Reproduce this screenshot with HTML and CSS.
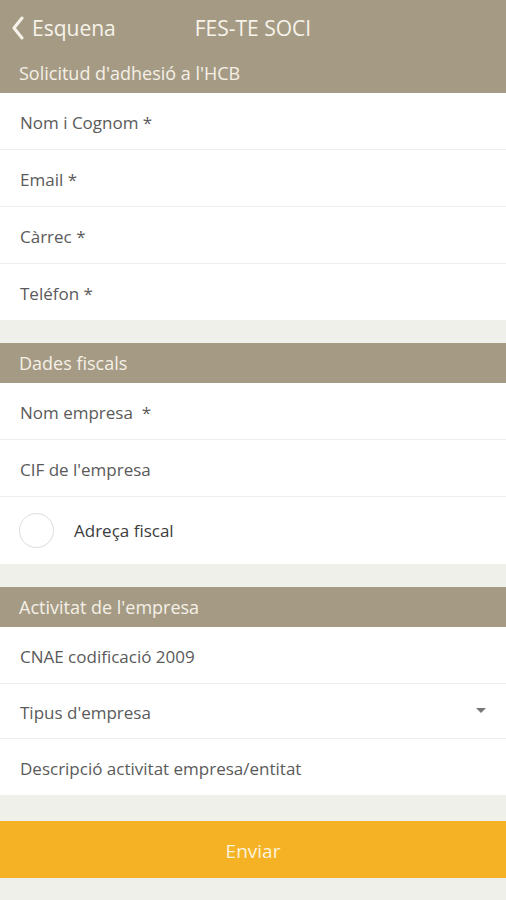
FILE: index.html
```html
<!DOCTYPE html>
<html lang="ca">
<head>
<meta charset="utf-8">
<title>FES-TE SOCI</title>
<link rel="stylesheet" href="styles.css">
</head>
<body>
<header class="topbar">
  <a class="back">
    <svg class="chev" width="14" height="24" viewBox="0 0 14 24"><path d="M11 2 L3 12 L11 22" fill="none" stroke="currentColor" stroke-width="3" stroke-linecap="round" stroke-linejoin="round"/></svg>
    <span>Esquena</span>
  </a>
  <h1 class="title">FES-TE SOCI</h1>
</header>
<main class="form">
  <section class="group">
    <h2 class="group-title first">Solicitud d'adhesió a l'HCB</h2>
    <div class="row">Nom i Cognom *</div>
    <div class="row">Email *</div>
    <div class="row">Càrrec *</div>
    <div class="row last">Teléfon *</div>
  </section>
  <section class="group">
    <h2 class="group-title">Dades fiscals</h2>
    <div class="row">Nom empresa &nbsp;*</div>
    <div class="row">CIF de l'empresa</div>
    <div class="row check last"><span class="circle"></span><span class="check-label">Adreça fiscal</span></div>
  </section>
  <section class="group">
    <h2 class="group-title">Activitat de l'empresa</h2>
    <div class="row">CNAE codificació 2009</div>
    <div class="row select">Tipus d'empresa<span class="caret"></span></div>
    <div class="row last">Descripció activitat empresa/entitat</div>
  </section>
  <button class="send">Enviar</button>
</main>
</body>
</html>
```
FILE: styles.css
```css
* { box-sizing: border-box; margin: 0; padding: 0; }
html, body { background: #f0f0eb; }
body {
  font-family: "Open Sans", "Noto Sans", sans-serif;
  width: 506px;
  height: 900px;
  overflow: hidden;
}
.topbar {
  background: #a59b85;
  height: 54px;
  display: flex;
  align-items: center;
  color: #f7f3ea;
  padding-top: 1px;
}
.back {
  display: flex;
  align-items: center;
  gap: 7px;
  padding-left: 11px;
  font-size: 21px;
  color: #f7f3ea;
}
.chev { display: block; }
.title {
  font-weight: 400;
  font-size: 21px;
  margin-left: 79px;
}
.group-title {
  background: #a59b85;
  color: #f5f0e6;
  font-weight: 400;
  font-size: 18px;
  height: 40px;
  line-height: 40px;
  padding-left: 19px;
  margin-top: 23px;
}
.group-title.first { margin-top: 0; height: 39px; line-height: 38px; }
.row {
  background: #fff;
  height: 57px;
  border-bottom: 1px solid #efefec;
  display: flex;
  align-items: center;
  padding: 3px 20px 0;
  font-size: 17px;
  color: #5a5a5a;
}
.row.last { border-bottom: none; height: 56px; }
.row.check { height: 67px; padding-left: 19px; padding-top: 0; }
.circle {
  width: 35px;
  height: 35px;
  border-radius: 50%;
  border: 1px solid #dcdcdc;
  flex: none;
}
.check-label { margin-left: 20px; color: #3c3c3c; }
.row.select { justify-content: space-between; height: 55px; }
.caret {
  width: 0;
  height: 0;
  border-left: 5px solid transparent;
  border-right: 5px solid transparent;
  border-top: 5px solid #777;
  margin-top: -4px;
}
.send {
  display: block;
  width: 100%;
  height: 57px;
  margin-top: 26px;
  border: none;
  background: #f5b225;
  color: #fdf3dc;
  font-family: "Open Sans", "Noto Sans", sans-serif;
  font-size: 19px;
  padding-top: 2px;
}
```
